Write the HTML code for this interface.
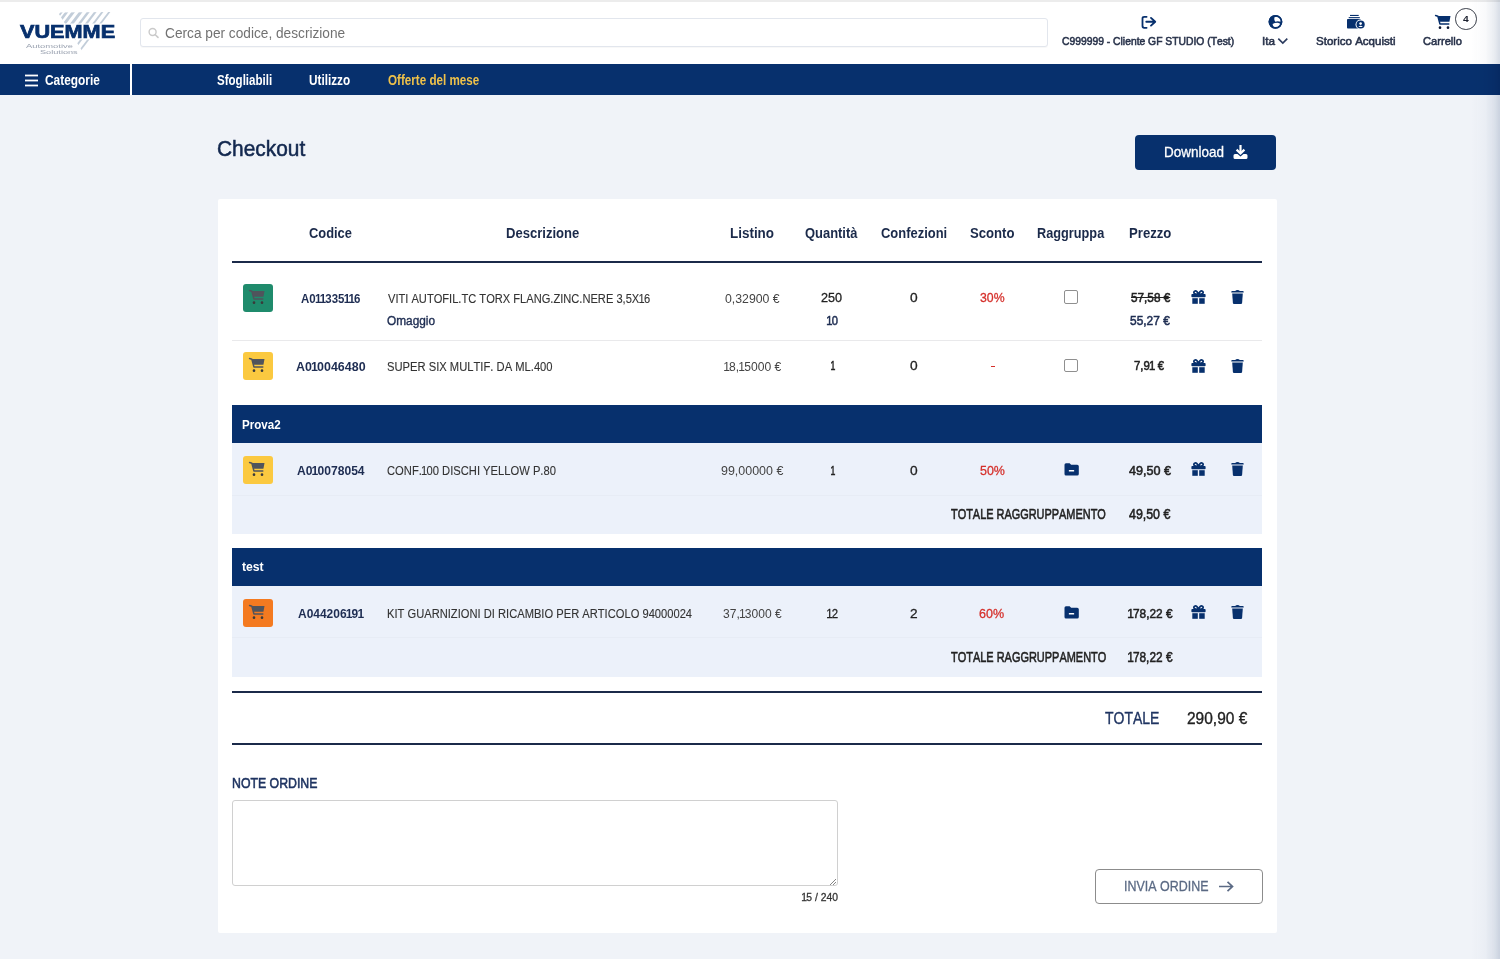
<!DOCTYPE html>
<html><head><meta charset="utf-8"><title>Checkout</title>
<style>
html,body{margin:0;padding:0;width:1500px;height:959px;overflow:hidden;background:#f0f3f8;}
body{position:relative;font-family:"Liberation Sans",sans-serif;}
.b{position:absolute;}
.t{position:absolute;white-space:nowrap;transform-origin:0 0;font-family:"Liberation Sans",sans-serif;font-kerning:none;}
.n1{margin:0 -0.07em;}
.i{position:absolute;overflow:visible;}
</style></head><body>
<div class="b" style="left:0.00px;top:0.00px;width:1500.00px;height:2.00px;background:#ececec"></div>
<div class="b" style="left:0.00px;top:2.00px;width:1500.00px;height:62.00px;background:#ffffff"></div>
<div class="b" style="left:140.00px;top:17.50px;width:908.00px;height:29.50px;background:#fff;border:1px solid #e2e6ed;border-radius:3px;box-sizing:border-box;box-shadow:0 1px 1px rgba(0,0,0,0.03)"></div>
<span class="t" style="left:165.32px;top:27.00px;font-size:13.81px;line-height:13.81px;font-weight:normal;color:#727272;transform:scaleX(0.9914);">Cerca per codice, descrizione</span>
<svg class="i" style="left:147px;top:26px" width="13" height="13" viewBox="0 0 13 13"><circle cx="5.6" cy="6" r="3.5" fill="none" stroke="#cacaca" stroke-width="1.4"/><line x1="8.3" y1="8.7" x2="11" y2="11.4" stroke="#cacaca" stroke-width="1.6" stroke-linecap="round"/></svg>
<svg class="i" style="left:0px;top:0px" width="130" height="60" viewBox="0 0 130 60"><defs><clipPath id="tri"><polygon points="58,12.5 112,12 84,54"/></clipPath></defs><g clip-path="url(#tri)" stroke="#c2cdd9"><line x1="64.8" y1="8" x2="28.3" y2="56" stroke-width="1.8"/><line x1="69.8" y1="8" x2="33.3" y2="56" stroke-width="2.6"/><line x1="76.3" y1="8" x2="39.8" y2="56" stroke-width="2.9"/><line x1="83.8" y1="8" x2="47.3" y2="56" stroke-width="2.9"/><line x1="91.3" y1="8" x2="54.8" y2="56" stroke-width="2.4"/><line x1="98.3" y1="8" x2="61.8" y2="56" stroke-width="2.2"/><line x1="105.3" y1="8" x2="68.8" y2="56" stroke-width="1.9"/><line x1="112.3" y1="8" x2="75.8" y2="56" stroke-width="1.8"/></g><rect x="15" y="23.5" width="105" height="16" fill="#fff"/></svg>
<span class="t" style="left:20.39px;top:23.00px;font-size:18.02px;line-height:18.02px;font-weight:bold;color:#07306d;transform:scaleX(1.2029);-webkit-text-stroke:0.7px #07306d;">VUEMME</span>
<span class="t" style="left:26.00px;top:44.00px;font-size:5.09px;line-height:5.09px;font-weight:normal;color:#9aa2b0;transform:scaleX(1.8447);">Automotive</span>
<span class="t" style="left:39.89px;top:51.00px;font-size:4.94px;line-height:4.94px;font-weight:normal;color:#9aa2b0;transform:scaleX(1.8555);">Solutions</span>
<span class="t" style="left:1062.48px;top:36.00px;font-size:11.05px;line-height:11.05px;font-weight:normal;color:#28324a;transform:scaleX(0.9348);-webkit-text-stroke:0.55px #28324a;">C999999 - Cliente GF STUDIO (Test)</span>
<span class="t" style="left:1261.94px;top:35.00px;font-size:11.63px;line-height:11.63px;font-weight:normal;color:#28324a;transform:scaleX(1.0117);-webkit-text-stroke:0.55px #28324a;">Ita</span>
<span class="t" style="left:1316.18px;top:35.00px;font-size:11.63px;line-height:11.63px;font-weight:normal;color:#28324a;transform:scaleX(0.9932);-webkit-text-stroke:0.55px #28324a;">Storico Acquisti</span>
<span class="t" style="left:1423.44px;top:35.00px;font-size:11.63px;line-height:11.63px;font-weight:normal;color:#28324a;transform:scaleX(0.9583);-webkit-text-stroke:0.55px #28324a;">Carrello</span>
<div class="b" style="left:1455.3px;top:8.2px;width:21.5px;height:21.5px;border:1.3px solid #3a3f4a;border-radius:50%;box-sizing:border-box"></div>
<span class="t" style="left:1462.85px;top:15.00px;font-size:9.16px;line-height:9.16px;font-weight:bold;color:#1d2230;transform:scaleX(1.1227);">4</span>
<svg class="i" style="left:1136px;top:10px" width="30" height="24" viewBox="0 0 30 24"><path d="M10.6 6.8 H8.2 Q6.5 6.8 6.5 8.5 V16.1 Q6.5 17.8 8.2 17.8 H10.6" fill="none" stroke="#07306d" stroke-width="1.8" stroke-linecap="round"/><path d="M10.3 11.75 H19 M15 7.9 L19.2 11.75 L15 15.6" fill="none" stroke="#07306d" stroke-width="1.9" stroke-linecap="round" stroke-linejoin="round"/></svg>
<svg class="i" style="left:1262px;top:10px" width="30" height="24" viewBox="0 0 30 24"><circle cx="13.45" cy="11.8" r="6.9" fill="#07306d"/><path d="M12.3 7.4 Q15.8 5.6 18.8 9.6 Q19.2 11 18.5 11.8 Q16 10.9 13.3 11.7 Q11.9 10 12.3 7.4 Z" fill="#fff"/><path d="M10.6 14 Q12.5 12.7 15.5 12.7 Q17.6 12.9 18.3 14 Q17.2 17.5 13.5 17.8 Q11 17.3 10.6 14 Z" fill="#fff"/><circle cx="13.45" cy="11.8" r="6.05" fill="none" stroke="#07306d" stroke-width="1.7"/></svg>
<svg class="i" style="left:1277px;top:37px" width="11" height="8" viewBox="0 0 11 8"><path d="M1.3 1.6 L5.8 6.1 L10.3 1.6" fill="none" stroke="#2b3b5e" stroke-width="1.6"/></svg>
<svg class="i" style="left:1340px;top:8px" width="30" height="26" viewBox="0 0 30 26"><rect x="10" y="6.9" width="8.7" height="1.1" fill="#07306d"/><rect x="8.7" y="9.1" width="11.1" height="1.1" fill="#07306d"/><rect x="7" y="11.1" width="13.9" height="9.5" rx="0.8" fill="#07306d"/><circle cx="20.6" cy="16.5" r="5.1" fill="#fff"/><circle cx="20.6" cy="16.5" r="4.1" fill="#07306d"/><circle cx="20.6" cy="15.6" r="1.3" fill="#fff"/><path d="M18.4 19.1 Q20.6 16.6 22.8 19.1 Z" fill="#fff"/></svg>
<svg class="i" style="left:1430px;top:5px" width="20" height="26" viewBox="0 0 20 26"><path d="M5.6 10.5 L7.9 11.2 L9.9 18.9 H18.8" fill="none" stroke="#07306d" stroke-width="1.5" stroke-linecap="round" stroke-linejoin="round"/><path d="M7.9 11 H20.5 L19.4 16.7 H9.5 Z" fill="#07306d"/><circle cx="10" cy="22.7" r="1.35" fill="#0d1733"/><circle cx="18" cy="22.7" r="1.35" fill="#0d1733"/></svg>
<div class="b" style="left:0.00px;top:64.00px;width:1500.00px;height:31.00px;background:#07306d"></div>
<div class="b" style="left:130.00px;top:64.00px;width:2.00px;height:31.00px;background:#ffffff"></div>
<svg class="i" style="left:25px;top:73.5px" width="14" height="13" viewBox="0 0 14 13"><g stroke="#fff" stroke-width="1.8"><line x1="0" y1="1.5" x2="13" y2="1.5"/><line x1="0" y1="6.5" x2="13" y2="6.5"/><line x1="0" y1="11.5" x2="13" y2="11.5"/></g></svg>
<span class="t" style="left:44.52px;top:73.00px;font-size:14.10px;line-height:14.10px;font-weight:bold;color:#ffffff;transform:scaleX(0.8446);">Categorie</span>
<span class="t" style="left:217.25px;top:73.00px;font-size:14.54px;line-height:14.54px;font-weight:bold;color:#ffffff;transform:scaleX(0.7938);">Sfogliabili</span>
<span class="t" style="left:309.29px;top:73.00px;font-size:14.54px;line-height:14.54px;font-weight:bold;color:#ffffff;transform:scaleX(0.8094);">Utilizzo</span>
<span class="t" style="left:388.13px;top:73.00px;font-size:14.54px;line-height:14.54px;font-weight:bold;color:#eec14a;transform:scaleX(0.8015);">Offerte del mese</span>
<div class="b" style="left:0.00px;top:95.00px;width:1500.00px;height:864.00px;background:#f0f3f8"></div>
<span class="t" style="left:216.96px;top:137.00px;font-size:22.82px;line-height:22.82px;font-weight:normal;color:#13284f;transform:scaleX(0.9153);-webkit-text-stroke:0.55px #13284f;">Checkout</span>
<div class="b" style="left:1134.70px;top:134.60px;width:141.80px;height:35.80px;background:#07306d;border-radius:4px"></div>
<span class="t" style="left:1163.52px;top:145.00px;font-size:14.97px;line-height:14.97px;font-weight:normal;color:#ffffff;transform:scaleX(0.9010);-webkit-text-stroke:0.30px #ffffff;">Download</span>
<svg class="i" style="left:1232px;top:144px" width="17" height="16" viewBox="0 0 17 16"><path d="M8.5 1 V9" stroke="#fff" stroke-width="2.2"/><path d="M4.6 5.6 L8.5 9.5 L12.4 5.6" fill="none" stroke="#fff" stroke-width="2.2"/><path d="M1.5 11.5 Q1.5 10 3 10 H5.5 L8.5 12.5 L11.5 10 H14 Q15.5 10 15.5 11.5 V13.5 Q15.5 15 14 15 H3 Q1.5 15 1.5 13.5 Z" fill="#fff"/></svg>
<div class="b" style="left:217.50px;top:199.00px;width:1059.50px;height:734.00px;background:#ffffff;border-radius:2px"></div>
<span class="t" style="left:309.08px;top:226.00px;font-size:14.10px;line-height:14.10px;font-weight:bold;color:#1b2a4a;transform:scaleX(0.9138);">Codice</span>
<span class="t" style="left:506.15px;top:226.00px;font-size:14.10px;line-height:14.10px;font-weight:bold;color:#1b2a4a;transform:scaleX(0.9268);">Descrizione</span>
<span class="t" style="left:730.13px;top:226.00px;font-size:14.10px;line-height:14.10px;font-weight:bold;color:#1b2a4a;transform:scaleX(0.9531);">Listino</span>
<span class="t" style="left:805.48px;top:226.00px;font-size:14.10px;line-height:14.10px;font-weight:bold;color:#1b2a4a;transform:scaleX(0.9175);">Quantità</span>
<span class="t" style="left:881.48px;top:226.00px;font-size:14.10px;line-height:14.10px;font-weight:bold;color:#1b2a4a;transform:scaleX(0.9183);">Confezioni</span>
<span class="t" style="left:970.01px;top:226.00px;font-size:14.10px;line-height:14.10px;font-weight:bold;color:#1b2a4a;transform:scaleX(0.9314);">Sconto</span>
<span class="t" style="left:1037.17px;top:226.00px;font-size:14.10px;line-height:14.10px;font-weight:bold;color:#1b2a4a;transform:scaleX(0.9036);">Raggruppa</span>
<span class="t" style="left:1129.14px;top:226.00px;font-size:14.10px;line-height:14.10px;font-weight:bold;color:#1b2a4a;transform:scaleX(0.9335);">Prezzo</span>
<div class="b" style="left:232.00px;top:261.00px;width:1030.00px;height:2.00px;background:#1b2a4a"></div>
<div class="b" style="left:243.00px;top:284.00px;width:29.50px;height:28.00px;background:#1f8b6c;border-radius:3px"></div><svg class="i" style="left:244.2px;top:280.00px" width="20" height="26" viewBox="0 0 20 26"><path d="M5.6 10.5 L7.9 11.2 L9.9 18.9 H18.8" fill="none" stroke="#50545c" stroke-width="1.5" stroke-linecap="round" stroke-linejoin="round"/><path d="M7.9 11 H20.5 L19.4 16.7 H9.5 Z" fill="#50545c"/><circle cx="10" cy="22.7" r="1.35" fill="#3a3a3a"/><circle cx="18" cy="22.7" r="1.35" fill="#3a3a3a"/></svg>
<span class="t" style="left:301.11px;top:292.00px;font-size:13.08px;line-height:13.08px;font-weight:bold;color:#1e2d52;transform:scaleX(0.8775);">A0<span class="n1">1</span><span class="n1">1</span>335<span class="n1">1</span><span class="n1">1</span>6</span>
<span class="t" style="left:387.94px;top:292.00px;font-size:13.08px;line-height:13.08px;font-weight:normal;color:#333333;transform:scaleX(0.8495);-webkit-text-stroke:0.12px #333333;">VITI AUTOFIL.TC TORX FLANG.ZINC.NERE 3,5X<span class="n1">1</span>6</span>
<span class="t" style="left:387.47px;top:315.00px;font-size:12.50px;line-height:12.50px;font-weight:normal;color:#1e2d52;transform:scaleX(0.9471);-webkit-text-stroke:0.4px #1e2d52;">Omaggio</span>
<span class="t" style="left:724.51px;top:292.00px;font-size:13.08px;line-height:13.08px;font-weight:normal;color:#444;transform:scaleX(0.9392);">0,32900 €</span>
<span class="t" style="left:821.37px;top:291.00px;font-size:13.08px;line-height:13.08px;font-weight:normal;color:#222;transform:scaleX(0.9676);-webkit-text-stroke:0.30px #222;">250</span>
<span class="t" style="left:826.94px;top:314.00px;font-size:13.37px;line-height:13.37px;font-weight:normal;color:#1e2d52;transform:scaleX(0.8363);-webkit-text-stroke:0.55px #1e2d52;"><span class="n1">1</span>0</span>
<span class="t" style="left:910.45px;top:291.00px;font-size:13.08px;line-height:13.08px;font-weight:normal;color:#222;transform:scaleX(1.0511);-webkit-text-stroke:0.30px #222;">0</span>
<span class="t" style="left:979.51px;top:291.00px;font-size:13.08px;line-height:13.08px;font-weight:normal;color:#d5302b;transform:scaleX(0.9372);-webkit-text-stroke:0.30px #d5302b;">30%</span>
<div class="b" style="left:1064.20px;top:290.30px;width:13.80px;height:13.60px;background:#fff;border:1.3px solid #8f8f8f;border-radius:2px;box-sizing:border-box"></div>
<span class="t" style="left:1130.73px;top:291.00px;font-size:13.08px;line-height:13.08px;font-weight:normal;color:#222;transform:scaleX(0.8996);-webkit-text-stroke:0.55px #222;text-decoration:line-through;">57,58 €</span>
<span class="t" style="left:1130.12px;top:314.00px;font-size:13.37px;line-height:13.37px;font-weight:normal;color:#1e2d52;transform:scaleX(0.8937);-webkit-text-stroke:0.55px #1e2d52;">55,27 €</span>
<svg class="i" style="left:1191.20px;top:290.00px" width="15" height="14" viewBox="0 0 15 14"><path d="M7.5 4.3 Q6 0.6 4 1 Q2.4 1.5 3 3.2 Q3.6 4.3 7.5 4.3 Z M7.5 4.3 Q9 0.6 11 1 Q12.6 1.5 12 3.2 Q11.4 4.3 7.5 4.3 Z" fill="none" stroke="#07306d" stroke-width="1.7"/><rect x="0.4" y="4" width="14.2" height="3.2" rx="0.8" fill="#07306d"/><rect x="1.3" y="8.2" width="5.5" height="5.6" fill="#07306d"/><rect x="8.2" y="8.2" width="5.5" height="5.6" fill="#07306d"/></svg>
<svg class="i" style="left:1231.20px;top:290.00px" width="13" height="14" viewBox="0 0 13 14"><path d="M0.3 1.8 Q0.3 0.9 1.2 0.9 H4.2 Q5 0 6.5 0 Q8 0 8.8 0.9 H11.8 Q12.7 0.9 12.7 1.8 V2.4 H0.3 Z" fill="#07306d"/><path d="M1.2 3.4 H11.8 L11.1 13 Q11 14 10 14 H3 Q2 14 1.9 13 Z" fill="#07306d"/></svg>
<div class="b" style="left:232.00px;top:340.00px;width:1030.00px;height:1.00px;background:#e9e9eb"></div>
<div class="b" style="left:243.00px;top:351.80px;width:29.50px;height:28.00px;background:#fbc940;border-radius:3px"></div><svg class="i" style="left:244.2px;top:347.80px" width="20" height="26" viewBox="0 0 20 26"><path d="M5.6 10.5 L7.9 11.2 L9.9 18.9 H18.8" fill="none" stroke="#50545c" stroke-width="1.5" stroke-linecap="round" stroke-linejoin="round"/><path d="M7.9 11 H20.5 L19.4 16.7 H9.5 Z" fill="#50545c"/><circle cx="10" cy="22.7" r="1.35" fill="#3a3a3a"/><circle cx="18" cy="22.7" r="1.35" fill="#3a3a3a"/></svg>
<span class="t" style="left:295.99px;top:360.00px;font-size:13.08px;line-height:13.08px;font-weight:bold;color:#1e2d52;transform:scaleX(0.9514);">A0<span class="n1">1</span>0046480</span>
<span class="t" style="left:386.80px;top:360.00px;font-size:13.08px;line-height:13.08px;font-weight:normal;color:#333333;transform:scaleX(0.8565);-webkit-text-stroke:0.12px #333333;">SUPER SIX MULTIF. DA ML.400</span>
<span class="t" style="left:723.54px;top:360.00px;font-size:13.08px;line-height:13.08px;font-weight:normal;color:#444;transform:scaleX(0.9245);"><span class="n1">1</span>8,<span class="n1">1</span>5000 €</span>
<span class="t" style="left:830.56px;top:359.00px;font-size:13.08px;line-height:13.08px;font-weight:normal;color:#222;transform:scaleX(0.6678);-webkit-text-stroke:0.55px #222;"><span class="n1">1</span></span>
<span class="t" style="left:910.45px;top:359.00px;font-size:13.08px;line-height:13.08px;font-weight:normal;color:#222;transform:scaleX(1.0511);-webkit-text-stroke:0.30px #222;">0</span>
<div class="b" style="left:990.50px;top:365.50px;width:4.00px;height:1.50px;background:#d5302b"></div>
<div class="b" style="left:1064.20px;top:358.50px;width:13.80px;height:13.60px;background:#fff;border:1.3px solid #8f8f8f;border-radius:2px;box-sizing:border-box"></div>
<span class="t" style="left:1134.43px;top:359.00px;font-size:13.08px;line-height:13.08px;font-weight:normal;color:#222;transform:scaleX(0.8698);-webkit-text-stroke:0.55px #222;">7,9<span class="n1">1</span> €</span>
<svg class="i" style="left:1191.20px;top:358.50px" width="15" height="14" viewBox="0 0 15 14"><path d="M7.5 4.3 Q6 0.6 4 1 Q2.4 1.5 3 3.2 Q3.6 4.3 7.5 4.3 Z M7.5 4.3 Q9 0.6 11 1 Q12.6 1.5 12 3.2 Q11.4 4.3 7.5 4.3 Z" fill="none" stroke="#07306d" stroke-width="1.7"/><rect x="0.4" y="4" width="14.2" height="3.2" rx="0.8" fill="#07306d"/><rect x="1.3" y="8.2" width="5.5" height="5.6" fill="#07306d"/><rect x="8.2" y="8.2" width="5.5" height="5.6" fill="#07306d"/></svg>
<svg class="i" style="left:1231.20px;top:358.50px" width="13" height="14" viewBox="0 0 13 14"><path d="M0.3 1.8 Q0.3 0.9 1.2 0.9 H4.2 Q5 0 6.5 0 Q8 0 8.8 0.9 H11.8 Q12.7 0.9 12.7 1.8 V2.4 H0.3 Z" fill="#07306d"/><path d="M1.2 3.4 H11.8 L11.1 13 Q11 14 10 14 H3 Q2 14 1.9 13 Z" fill="#07306d"/></svg>
<div class="b" style="left:232.00px;top:405.00px;width:1030.00px;height:38.00px;background:#07306d"></div>
<span class="t" style="left:241.85px;top:418.00px;font-size:13.08px;line-height:13.08px;font-weight:bold;color:#ffffff;transform:scaleX(0.8851);">Prova2</span>
<div class="b" style="left:232.00px;top:443.00px;width:1030.00px;height:91.00px;background:#ecf1fa"></div>
<div class="b" style="left:232.00px;top:494.50px;width:1030.00px;height:1.00px;background:#e7ecf5"></div>
<div class="b" style="left:243.00px;top:455.50px;width:29.50px;height:28.00px;background:#fbc940;border-radius:3px"></div><svg class="i" style="left:244.2px;top:451.50px" width="20" height="26" viewBox="0 0 20 26"><path d="M5.6 10.5 L7.9 11.2 L9.9 18.9 H18.8" fill="none" stroke="#50545c" stroke-width="1.5" stroke-linecap="round" stroke-linejoin="round"/><path d="M7.9 11 H20.5 L19.4 16.7 H9.5 Z" fill="#50545c"/><circle cx="10" cy="22.7" r="1.35" fill="#3a3a3a"/><circle cx="18" cy="22.7" r="1.35" fill="#3a3a3a"/></svg>
<span class="t" style="left:296.70px;top:464.00px;font-size:13.66px;line-height:13.66px;font-weight:bold;color:#1e2d52;transform:scaleX(0.8854);">A0<span class="n1">1</span>0078054</span>
<span class="t" style="left:387.14px;top:464.00px;font-size:13.66px;line-height:13.66px;font-weight:normal;color:#333333;transform:scaleX(0.8197);-webkit-text-stroke:0.12px #333333;">CONF.<span class="n1">1</span>00 DISCHI YELLOW P.80</span>
<span class="t" style="left:720.74px;top:464.00px;font-size:13.66px;line-height:13.66px;font-weight:normal;color:#444;transform:scaleX(0.9117);">99,00000 €</span>
<span class="t" style="left:830.56px;top:464.00px;font-size:13.66px;line-height:13.66px;font-weight:normal;color:#222;transform:scaleX(0.6394);-webkit-text-stroke:0.55px #222;"><span class="n1">1</span></span>
<span class="t" style="left:910.45px;top:464.00px;font-size:13.66px;line-height:13.66px;font-weight:normal;color:#222;transform:scaleX(1.0064);-webkit-text-stroke:0.30px #222;">0</span>
<span class="t" style="left:979.50px;top:464.00px;font-size:13.66px;line-height:13.66px;font-weight:normal;color:#d5302b;transform:scaleX(0.9125);-webkit-text-stroke:0.30px #d5302b;">50%</span>
<svg class="i" style="left:1063.50px;top:462.80px" width="16" height="13" viewBox="0 0 16 13"><path d="M0.5 1.8 Q0.5 0.2 2 0.2 H5.6 L7.1 1.7 H13.2 Q14.8 1.7 14.8 3.3 V11 Q14.8 12.6 13.2 12.6 H2 Q0.5 12.6 0.5 11 Z" fill="#07306d"/><rect x="4.8" y="6.9" width="5.4" height="1.6" rx="0.6" fill="#fff"/></svg>
<span class="t" style="left:1129.05px;top:464.00px;font-size:13.66px;line-height:13.66px;font-weight:normal;color:#222;transform:scaleX(0.9249);-webkit-text-stroke:0.55px #222;">49,50 €</span>
<svg class="i" style="left:1191.20px;top:462.00px" width="15" height="14" viewBox="0 0 15 14"><path d="M7.5 4.3 Q6 0.6 4 1 Q2.4 1.5 3 3.2 Q3.6 4.3 7.5 4.3 Z M7.5 4.3 Q9 0.6 11 1 Q12.6 1.5 12 3.2 Q11.4 4.3 7.5 4.3 Z" fill="none" stroke="#07306d" stroke-width="1.7"/><rect x="0.4" y="4" width="14.2" height="3.2" rx="0.8" fill="#07306d"/><rect x="1.3" y="8.2" width="5.5" height="5.6" fill="#07306d"/><rect x="8.2" y="8.2" width="5.5" height="5.6" fill="#07306d"/></svg>
<svg class="i" style="left:1231.20px;top:462.00px" width="13" height="14" viewBox="0 0 13 14"><path d="M0.3 1.8 Q0.3 0.9 1.2 0.9 H4.2 Q5 0 6.5 0 Q8 0 8.8 0.9 H11.8 Q12.7 0.9 12.7 1.8 V2.4 H0.3 Z" fill="#07306d"/><path d="M1.2 3.4 H11.8 L11.1 13 Q11 14 10 14 H3 Q2 14 1.9 13 Z" fill="#07306d"/></svg>
<span class="t" style="left:951.18px;top:507.00px;font-size:14.10px;line-height:14.10px;font-weight:normal;color:#222;transform:scaleX(0.7752);-webkit-text-stroke:0.55px #222;">TOTALE RAGGRUPPAMENTO</span>
<span class="t" style="left:1129.45px;top:507.00px;font-size:14.10px;line-height:14.10px;font-weight:normal;color:#222;transform:scaleX(0.8791);-webkit-text-stroke:0.55px #222;">49,50 €</span>
<div class="b" style="left:232.00px;top:548.00px;width:1030.00px;height:38.00px;background:#07306d"></div>
<span class="t" style="left:242.48px;top:560.00px;font-size:13.08px;line-height:13.08px;font-weight:bold;color:#ffffff;transform:scaleX(0.9321);">test</span>
<div class="b" style="left:232.00px;top:586.00px;width:1030.00px;height:91.00px;background:#ecf1fa"></div>
<div class="b" style="left:232.00px;top:637.00px;width:1030.00px;height:1.00px;background:#e7ecf5"></div>
<div class="b" style="left:243.00px;top:598.50px;width:29.50px;height:28.00px;background:#f47a20;border-radius:3px"></div><svg class="i" style="left:244.2px;top:594.50px" width="20" height="26" viewBox="0 0 20 26"><path d="M5.6 10.5 L7.9 11.2 L9.9 18.9 H18.8" fill="none" stroke="#50545c" stroke-width="1.5" stroke-linecap="round" stroke-linejoin="round"/><path d="M7.9 11 H20.5 L19.4 16.7 H9.5 Z" fill="#50545c"/><circle cx="10" cy="22.7" r="1.35" fill="#3a3a3a"/><circle cx="18" cy="22.7" r="1.35" fill="#3a3a3a"/></svg>
<span class="t" style="left:297.90px;top:607.00px;font-size:13.52px;line-height:13.52px;font-weight:bold;color:#1e2d52;transform:scaleX(0.8853);">A044206<span class="n1">1</span>9<span class="n1">1</span></span>
<span class="t" style="left:386.81px;top:607.00px;font-size:13.52px;line-height:13.52px;font-weight:normal;color:#333333;transform:scaleX(0.8256);-webkit-text-stroke:0.12px #333333;">KIT GUARNIZIONI DI RICAMBIO PER ARTICOLO 94000024</span>
<span class="t" style="left:722.52px;top:607.00px;font-size:13.52px;line-height:13.52px;font-weight:normal;color:#444;transform:scaleX(0.8920);">37,<span class="n1">1</span>3000 €</span>
<span class="t" style="left:826.94px;top:607.00px;font-size:13.52px;line-height:13.52px;font-weight:normal;color:#222;transform:scaleX(0.8408);-webkit-text-stroke:0.30px #222;"><span class="n1">1</span>2</span>
<span class="t" style="left:910.32px;top:607.00px;font-size:13.52px;line-height:13.52px;font-weight:normal;color:#222;transform:scaleX(1.0080);-webkit-text-stroke:0.30px #222;">2</span>
<span class="t" style="left:979.37px;top:607.00px;font-size:13.52px;line-height:13.52px;font-weight:normal;color:#d5302b;transform:scaleX(0.9271);-webkit-text-stroke:0.30px #d5302b;">60%</span>
<svg class="i" style="left:1063.50px;top:605.50px" width="16" height="13" viewBox="0 0 16 13"><path d="M0.5 1.8 Q0.5 0.2 2 0.2 H5.6 L7.1 1.7 H13.2 Q14.8 1.7 14.8 3.3 V11 Q14.8 12.6 13.2 12.6 H2 Q0.5 12.6 0.5 11 Z" fill="#07306d"/><rect x="4.8" y="6.9" width="5.4" height="1.6" rx="0.6" fill="#fff"/></svg>
<span class="t" style="left:1127.94px;top:607.00px;font-size:13.52px;line-height:13.52px;font-weight:normal;color:#222;transform:scaleX(0.8766);-webkit-text-stroke:0.55px #222;"><span class="n1">1</span>78,22 €</span>
<svg class="i" style="left:1191.20px;top:605.00px" width="15" height="14" viewBox="0 0 15 14"><path d="M7.5 4.3 Q6 0.6 4 1 Q2.4 1.5 3 3.2 Q3.6 4.3 7.5 4.3 Z M7.5 4.3 Q9 0.6 11 1 Q12.6 1.5 12 3.2 Q11.4 4.3 7.5 4.3 Z" fill="none" stroke="#07306d" stroke-width="1.7"/><rect x="0.4" y="4" width="14.2" height="3.2" rx="0.8" fill="#07306d"/><rect x="1.3" y="8.2" width="5.5" height="5.6" fill="#07306d"/><rect x="8.2" y="8.2" width="5.5" height="5.6" fill="#07306d"/></svg>
<svg class="i" style="left:1231.20px;top:605.00px" width="13" height="14" viewBox="0 0 13 14"><path d="M0.3 1.8 Q0.3 0.9 1.2 0.9 H4.2 Q5 0 6.5 0 Q8 0 8.8 0.9 H11.8 Q12.7 0.9 12.7 1.8 V2.4 H0.3 Z" fill="#07306d"/><path d="M1.2 3.4 H11.8 L11.1 13 Q11 14 10 14 H3 Q2 14 1.9 13 Z" fill="#07306d"/></svg>
<span class="t" style="left:950.98px;top:650.00px;font-size:14.54px;line-height:14.54px;font-weight:normal;color:#222;transform:scaleX(0.7543);-webkit-text-stroke:0.55px #222;">TOTALE RAGGRUPPAMENTO</span>
<span class="t" style="left:1127.94px;top:650.00px;font-size:14.54px;line-height:14.54px;font-weight:normal;color:#222;transform:scaleX(0.8153);-webkit-text-stroke:0.55px #222;"><span class="n1">1</span>78,22 €</span>
<div class="b" style="left:232.00px;top:691.00px;width:1030.00px;height:2.00px;background:#1b2a4a"></div>
<span class="t" style="left:1104.72px;top:710.00px;font-size:16.13px;line-height:16.13px;font-weight:normal;color:#1f3461;transform:scaleX(0.8690);-webkit-text-stroke:0.35px #1f3461;">TOTALE</span>
<span class="t" style="left:1187.22px;top:710.00px;font-size:16.13px;line-height:16.13px;font-weight:normal;color:#222;transform:scaleX(0.9609);-webkit-text-stroke:0.35px #222;">290,90 €</span>
<div class="b" style="left:232.00px;top:743.00px;width:1030.00px;height:2.00px;background:#1b2a4a"></div>
<span class="t" style="left:231.62px;top:776.00px;font-size:14.54px;line-height:14.54px;font-weight:normal;color:#1f3461;transform:scaleX(0.8468);-webkit-text-stroke:0.55px #1f3461;">NOTE ORDINE</span>
<div class="b" style="left:232.00px;top:800.00px;width:605.50px;height:86.00px;background:#fff;border:1.3px solid #d0d0d0;border-radius:3px;box-sizing:border-box"></div>
<svg class="i" style="left:827px;top:876px" width="10" height="10" viewBox="0 0 10 10"><g stroke="#777" stroke-width="0.9"><line x1="9" y1="3" x2="3" y2="9"/><line x1="9" y1="6" x2="6" y2="9"/></g></svg>
<span class="t" style="left:801.65px;top:892.00px;font-size:11.19px;line-height:11.19px;font-weight:normal;color:#333;transform:scaleX(0.9234);-webkit-text-stroke:0.30px #333;"><span class="n1">1</span>5 / 240</span>
<div class="b" style="left:1095.40px;top:869.00px;width:167.20px;height:35.00px;background:#fff;border:1.5px solid #8c8c8c;border-radius:4px;box-sizing:border-box"></div>
<span class="t" style="left:1124.28px;top:878.00px;font-size:15.12px;line-height:15.12px;font-weight:normal;color:#5b6a84;transform:scaleX(0.8253);-webkit-text-stroke:0.30px #5b6a84;">INVIA ORDINE</span>
<svg class="i" style="left:1218px;top:880px" width="17" height="13" viewBox="0 0 17 13"><path d="M1 6.5 H14.5 M9.5 1.8 L14.5 6.5 L9.5 11.2" fill="none" stroke="#5b6a84" stroke-width="1.7"/></svg>
<div class="b" style="left:1470.00px;top:0.00px;width:30.00px;height:959.00px;background:linear-gradient(to right, rgba(150,165,190,0) 0%, rgba(150,165,190,0.05) 50%, rgba(150,165,190,0.2) 80%, rgba(150,165,190,0.38) 100%);mix-blend-mode:multiply"></div>
</body></html>
